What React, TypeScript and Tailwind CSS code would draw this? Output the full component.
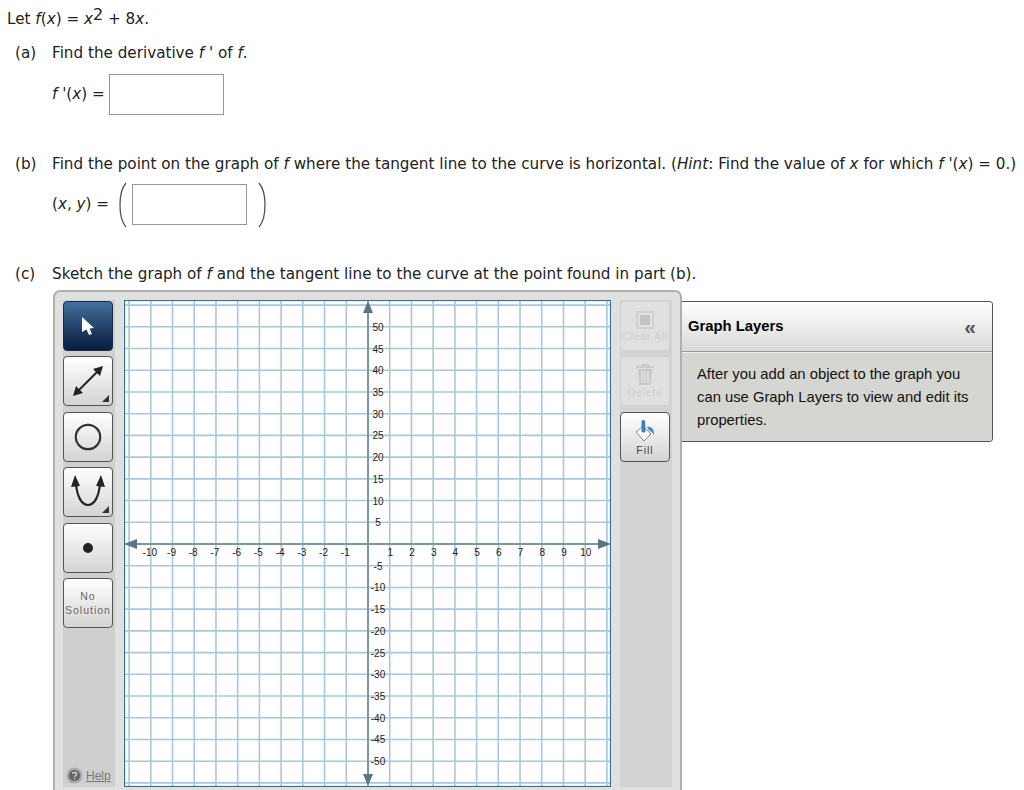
const UNIT = 21.72;
const CX = 244;
const CY = 244;
const SIZE = 487;

const steps = Array.from({ length: 23 }, (_, i) => i - 11);

function Plot() {
  return (
    <svg width={SIZE} height={SIZE} className="block shrink-0 bg-white">
      <g stroke="#a8c8d8" strokeWidth="1.6">
        {steps.map((n) => (
          <line key={"v" + n} x1={CX + n * UNIT} y1="0" x2={CX + n * UNIT} y2={SIZE} />
        ))}
        {steps.map((n) => (
          <line key={"h" + n} x1="0" y1={CY + n * UNIT} x2={SIZE} y2={CY + n * UNIT} />
        ))}
      </g>
      <rect x="0.5" y="0.5" width={SIZE - 1} height={SIZE - 1} fill="none" stroke="#2f6fa8" strokeWidth="1.2" />
      <g stroke="#7b97a5" strokeWidth="2">
        <line x1="4" y1={CY} x2={SIZE - 4} y2={CY} />
        <line x1={CX} y1="4" x2={CX} y2={SIZE - 4} />
      </g>
      <g fill="#5f7480">
        <path d={`M0 ${CY} l13 -5 v10 z`} />
        <path d={`M${SIZE} ${CY} l-13 -5 v10 z`} />
        <path d={`M${CX} 1 l-5 12 h10 z`} />
        <path d={`M${CX} ${SIZE - 1} l-5 -12 h10 z`} />
      </g>
      <g fontFamily="'Liberation Sans', sans-serif" fontSize="10" fill="#222" textAnchor="middle">
        {[-10, -9, -8, -7, -6, -5, -4, -3, -2, -1, 1, 2, 3, 4, 5, 6, 7, 8, 9, 10].map((n) => (
          <text key={"x" + n} x={CX + n * UNIT - (n < 0 ? 1 : -0.5)} y={CY + 12}>
            {n}
          </text>
        ))}
        {[10, 9, 8, 7, 6, 5, 4, 3, 2, 1, -1, -2, -3, -4, -5, -6, -7, -8, -9, -10].map((n) => (
          <text key={"y" + n} x={CX + 10} y={CY - n * UNIT + 4}>
            {n * 5}
          </text>
        ))}
      </g>
    </svg>
  );
}

function ToolButton({ active, disabled, children }: { active?: boolean; disabled?: boolean; children: React.ReactNode }) {
  const look = active
    ? "border-[#1c2c44] bg-gradient-to-b from-[#45709f] to-[#071d3c]"
    : disabled
      ? "border-[#d2d2d0] bg-[#e0e0de]"
      : "border-[#555] bg-gradient-to-b from-white to-[#d4d5d2]";
  return (
    <div className={"relative flex h-[50px] w-[50px] flex-col items-center justify-center rounded-[4px] border " + look}>
      {children}
    </div>
  );
}

function Corner() {
  return <div className="absolute bottom-[3px] right-[3px] h-0 w-0 border-b-[7px] border-l-[7px] border-b-[#333] border-l-transparent" />;
}

function LeftTools() {
  return (
    <div className="flex h-[487px] w-[52px] shrink-0 flex-col bg-[#cfcfcf] pt-px">
      <div className="flex flex-col gap-[5.4px]">
        <ToolButton active>
          <svg width="14" height="20" viewBox="0 0 14 20">
            <path d="M1 1 L13 12 L8.5 12.5 L11 18 L8 19 L5.5 13.5 L1 16 Z" fill="#fff" />
          </svg>
        </ToolButton>
        <ToolButton>
          <svg width="32" height="32" viewBox="0 0 32 32">
            <path d="M7 25 L25 7" stroke="#222" strokeWidth="2" />
            <path d="M31 1 L21 4 L28 11 Z M1 31 L11 28 L4 21 Z" fill="#222" />
          </svg>
          <Corner />
        </ToolButton>
        <ToolButton>
          <svg width="30" height="30" viewBox="0 0 30 30">
            <circle cx="15" cy="15" r="12.2" fill="none" stroke="#333" strokeWidth="2.2" />
          </svg>
        </ToolButton>
        <ToolButton>
          <svg width="34" height="34" viewBox="0 0 34 34">
            <path d="M5 9 C6 20 10 30 17 30 C24 30 28 20 29 9" fill="none" stroke="#222" strokeWidth="2.2" />
            <path d="M4 0 L0 12 L9 11 Z M30 0 L25 11 L34 12 Z" fill="#222" />
          </svg>
          <Corner />
        </ToolButton>
        <ToolButton>
          <div className="h-[10px] w-[10px] rounded-full bg-[#222]" />
        </ToolButton>
        <ToolButton>
          <span className="text-center font-['Liberation_Sans',sans-serif] text-[10.5px] leading-[14px] tracking-[1px] text-[#666]">
            No
            <br />
            Solution
          </span>
        </ToolButton>
      </div>
      <div className="mt-auto flex items-center gap-[3px] pb-[3px] pl-[3px]">
        <svg width="17" height="17" viewBox="0 0 17 17">
          <circle cx="8.5" cy="8.5" r="8" fill="#a9a9a9" />
          <circle cx="8.5" cy="8.5" r="5.6" fill="#666" />
          <path d="M6.6 7 C6.8 4.8 10.6 4.8 10.6 7 C10.6 8.6 8.6 8.4 8.6 10" fill="none" stroke="#ddd" strokeWidth="1.3" />
          <circle cx="8.6" cy="11.8" r="0.8" fill="#ddd" />
        </svg>
        <span className="font-['Liberation_Sans',sans-serif] text-[12px] leading-none text-[#777] underline">Help</span>
      </div>
    </div>
  );
}

function RightTools() {
  return (
    <div className="flex h-[487px] w-[52px] shrink-0 flex-col gap-[5.4px] bg-[#d3d3d2] pt-px">
      <ToolButton disabled>
        <svg width="18" height="18" viewBox="0 0 18 18" className="mb-[1px]">
          <rect x="1" y="1" width="16" height="16" fill="none" stroke="#d0d0ce" strokeWidth="2" />
          <rect x="4" y="4" width="10" height="10" fill="#c4c4c2" />
        </svg>
        <span className="font-['Liberation_Sans',sans-serif] text-[10.5px] leading-[12px] tracking-[0.7px] whitespace-nowrap text-[#cfcfcd]">Clear All</span>
      </ToolButton>
      <ToolButton disabled>
        <svg width="20" height="22" viewBox="0 0 20 22">
          <path d="M1 3 H19 M7 3 V1 H13 V3" fill="none" stroke="#c4c4c2" strokeWidth="1.6" />
          <path d="M3 5 H17 L15.5 21 H4.5 Z" fill="#c9c9c7" />
          <path d="M7 7 V19 M10 7 V19 M13 7 V19" stroke="#ebebe9" strokeWidth="1.2" />
        </svg>
        <span className="font-['Liberation_Sans',sans-serif] text-[10.5px] leading-[12px] tracking-[0.7px] text-[#cfcfcd]">Delete</span>
      </ToolButton>
      <ToolButton>
        <svg width="20" height="22" viewBox="0 0 20 22" className="mb-[2px] mt-[2px]">
          <path d="M1 12 L8 6 L16 14 L9 21 Z" fill="#fafaf8" stroke="#888" strokeWidth="1" />
          <path d="M6.5 1.5 C6.5 -0.5 10 -0.5 10 1.5 L10.5 11 C10.5 13 6.5 13 6.5 11 Z" fill="#3d7cc0" />
          <path d="M12 7 C16 6 19.5 9 19 15 C17.5 12.5 15.5 11 14 10.5 Z" fill="#4d8ccc" />
        </svg>
        <span className="font-['Liberation_Sans',sans-serif] text-[10.5px] leading-[12px] tracking-[1px] text-[#444]">Fill</span>
      </ToolButton>
    </div>
  );
}

function LayersPanel() {
  return (
    <div className="mt-[11px] w-[311px] shrink-0 overflow-hidden rounded-r-[4px] border border-l-0 border-[#555] font-['Liberation_Sans',sans-serif] text-black">
      <div className="flex h-[50px] items-center justify-between border-b border-b-[#999] bg-gradient-to-b from-white to-[#d9dad7] pl-[6px] pr-[16px]">
        <span className="text-[14.8px] font-bold">Graph Layers</span>
        <span className="text-[21px] font-bold leading-none text-[#555]">«</span>
      </div>
      <p className="h-[89px] border-t border-t-[#eee] bg-[#d5d6d2] pl-[15px] pr-[20px] pt-[10px] text-[14.8px] leading-[23px] text-[#111]">
        After you add an object to the graph you can use Graph Layers to view and edit its properties.
      </p>
    </div>
  );
}

function AnswerBox() {
  return <div className="h-[41px] w-[115px] shrink-0 border border-[#999] bg-white" />;
}

export default function App() {
  return (
    <div className="h-[790px] w-[1024px] overflow-hidden bg-white font-['DejaVu_Sans','Liberation_Sans',sans-serif] text-[15.2px] text-[#222]">
      <p className="h-[34px] pl-[7px] pt-[7px] leading-[18px]">
        Let <i>f</i>(<i>x</i>) = <i>x</i>
        <span className="align-[4px] text-[16px] leading-none">2</span> + 8<i>x</i>.
      </p>
      <div className="mt-[7px] flex h-[22px] items-center pl-[15px] pt-[2px]">
        <span className="w-[37px]">(a)</span>
        <span>
          Find the derivative <i>f</i> ' of <i>f</i>.
        </span>
      </div>
      <div className="mt-[11px] flex h-[41px] items-center pl-[52px]">
        <span className="w-[57px] whitespace-nowrap">
          <i>f</i> '(<i>x</i>) =
        </span>
        <AnswerBox />
      </div>
      <div className="mt-[38px] flex h-[22px] items-center whitespace-nowrap pl-[15px]">
        <span className="w-[37px]">(b)</span>
        <span>
          Find the point on the graph of <i>f</i> where the tangent line to the curve is horizontal. (<i>Hint</i>: Find the value of <i>x</i> for which <i>f</i> '(<i>x</i>) = 0.)
        </span>
      </div>
      <div className="mt-[9px] flex h-[41px] items-center pl-[52px]">
        <span className="w-[64px] whitespace-nowrap">
          (<i>x</i>, <i>y</i>) =
        </span>
        <svg width="12" height="46" viewBox="0 0 12 46" className="mr-[4px] shrink-0">
          <path d="M10 1 C2 10 2 36 10 45" fill="none" stroke="#555" strokeWidth="1.3" />
        </svg>
        <AnswerBox />
        <svg width="12" height="46" viewBox="0 0 12 46" className="ml-[10px] shrink-0">
          <path d="M2 1 C10 10 10 36 2 45" fill="none" stroke="#555" strokeWidth="1.3" />
        </svg>
      </div>
      <div className="mt-[38px] flex h-[22px] items-center pl-[15px]">
        <span className="w-[37px]">(c)</span>
        <span>
          Sketch the graph of <i>f</i> and the tangent line to the curve at the point found in part (b).
        </span>
      </div>
      <div className="ml-[53px] mt-[5px] flex items-start">
        <div className="flex h-[520px] w-[629px] shrink-0 items-start gap-[9px] rounded-t-[7px] border-x-2 border-t-2 border-x-[#b0b0ae] border-t-[#b0b0ae] bg-[#e0e0de] pl-[8px] pt-[8px]">
          <LeftTools />
          <Plot />
          <RightTools />
        </div>
        <LayersPanel />
      </div>
    </div>
  );
}
